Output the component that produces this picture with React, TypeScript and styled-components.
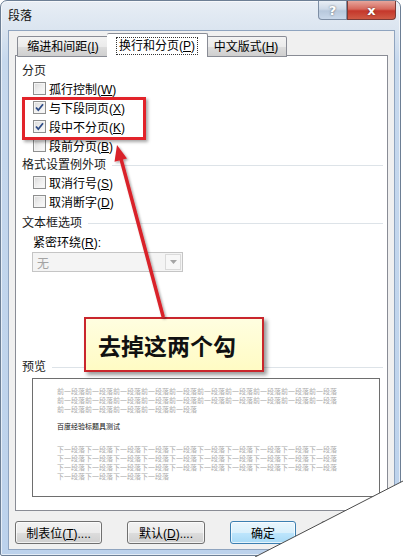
import React from 'react';
import styled, { createGlobalStyle } from 'styled-components';

const Global = createGlobalStyle`
  html, body { margin: 0; padding: 0; background: #fff; }
  body { font-family: "Liberation Sans", "Noto Sans CJK SC", sans-serif; font-size: 12px; color: #000; }
  #root { width: 403px; height: 557px; }
`;

const Root = styled.div`
  position: relative;
  width: 403px;
  height: 557px;
  overflow: hidden;
  background: #fff;
`;

const Window = styled.div`
  width: 399px;
  height: 554px;
  border: 1px solid #6d7f95;
  border-radius: 7px 7px 2px 2px;
  background: linear-gradient(180deg, #e8eef5 0px, #dbe5f0 28px, #c6d8ed 60px, #bcd2ec 100%);
  display: flex;
  flex-direction: column;
  box-shadow: inset 0 0 0 1px rgba(255,255,255,0.6);
`;

const TitleBar = styled.div`
  height: 29px;
  display: flex;
  align-items: flex-start;
  padding: 0 4px 0 7px;
`;

const Title = styled.div`
  margin-top: 6px;
  font-size: 12px;
  line-height: 18px;
  color: #111;
`;

const Caption = styled.div`
  margin-left: auto;
  display: flex;
`;

const CapBtn = styled.div<{ $kind: 'help' | 'close' }>`
  width: ${p => (p.$kind === 'close' ? 47 : 27)}px;
  height: 18px;
  display: flex;
  align-items: center;
  justify-content: center;
  border: 1px solid ${p => (p.$kind === 'close' ? '#7a3a36' : '#7d8ea4')};
  border-top: none;
  border-radius: ${p => (p.$kind === 'close' ? '0 0 4px 0' : '0 0 0 4px')};
  background: ${p =>
    p.$kind === 'close'
      ? 'linear-gradient(180deg, #e6a59b 0%, #d6685c 45%, #c4372b 55%, #cf5a45 100%)'
      : 'linear-gradient(180deg, #e9eef5 0%, #cdd9e7 45%, #b7c8dc 55%, #c9d8ea 100%)'};
  color: #fff;
  font-family: "DejaVu Sans", sans-serif;
  font-weight: bold;
  font-size: 13px;
  text-shadow: 0 0 2px rgba(0,0,0,0.6);
`;

const Client = styled.div`
  flex: 1;
  margin: 0 5px 5px 7px;
  border: 1px solid #8fa4bf;
  background: #f0f0f0;
  padding: 2px 6px 4px 6px;
  display: flex;
  flex-direction: column;
`;

const TabRow = styled.div`
  display: flex;
  height: 23px;
  padding-left: 2px;
  position: relative;
  z-index: 1;
  margin-bottom: -1px;
`;

const Tab = styled.div<{ $active?: boolean; $w: number }>`
  box-sizing: border-box;
  width: ${p => p.$w}px;
  margin-top: ${p => (p.$active ? 0 : 3)}px;
  height: ${p => (p.$active ? 24 : 21)}px;
  margin-left: ${p => (p.$active ? -2 : 0)}px;
  margin-right: ${p => (p.$active ? -2 : 0)}px;
  border: 1px solid #898c95;
  border-bottom: ${p => (p.$active ? 'none' : '1px solid #898c95')};
  border-radius: 2px 2px 0 0;
  background: ${p => (p.$active ? '#fff' : 'linear-gradient(180deg, #f3f3f3 0%, #ebebeb 50%, #dddddd 51%, #cfcfcf 100%)')};
  z-index: ${p => (p.$active ? 2 : 1)};
  display: flex;
  align-items: center;
  justify-content: center;
  font-size: 12px;
  line-height: 16px;
  white-space: nowrap;
  & + & { border-left: ${p => (p.$active ? '1px solid #898c95' : 'none')}; }
`;

const TabLabel = styled.span<{ $focus?: boolean }>`
  padding: 0 2px;
  outline: ${p => (p.$focus ? '1px dotted #333' : 'none')};
`;

const Panel = styled.div`
  box-sizing: border-box;
  width: 373px;
  height: 456px;
  border: 1px solid #898c95;
  background: #fff;
  padding: 7px 0 0 6px;
  display: flex;
  flex-direction: column;
`;

const GroupHead = styled.div<{ $mt?: number; $line?: boolean }>`
  display: flex;
  align-items: center;
  height: 16px;
  line-height: 16px;
  margin-top: ${p => p.$mt ?? 0}px;
  color: #1a1a1a;
  white-space: nowrap;
  &::after {
    content: '';
    flex: 1;
    margin: 1px 4px 0 6px;
    border-top: 1px solid ${p => (p.$line === false ? 'transparent' : '#dde3e8')};
  }
`;

const CheckRow = styled.div`
  display: flex;
  align-items: center;
  height: 19px;
  padding-left: 11px;
  gap: 3px;
  white-space: nowrap;
`;

const Box = styled.div`
  box-sizing: border-box;
  width: 13px;
  height: 13px;
  border: 1px solid #8e8f8f;
  background: linear-gradient(135deg, #d8d8d8 0%, #eeeeee 50%, #fbfbfb 100%);
  box-shadow: inset 0 0 0 1px #f4f4f4;
  display: flex;
  align-items: center;
  justify-content: center;
`;

const FieldLabel = styled.div`
  margin-top: 4px;
  padding-left: 11px;
  height: 16px;
  line-height: 16px;
`;

const Select = styled.div`
  box-sizing: border-box;
  margin: 1px 0 0 10px;
  width: 151px;
  height: 20px;
  border: 1px solid #c5c5c5;
  background: #f4f4f4;
  display: flex;
  align-items: center;
  justify-content: space-between;
  padding: 0 1px 0 4px;
  color: #a3a3a3;
`;

const DropBtn = styled.div`
  box-sizing: border-box;
  width: 16px;
  height: 16px;
  border: 1px solid #dadada;
  background: #f7f7f7;
  display: flex;
  align-items: center;
  justify-content: center;
`;

const Preview = styled.div`
  box-sizing: border-box;
  margin: 3px 0 0 10px;
  width: 348px;
  height: 119px;
  border: 1px solid #6e6e6e;
  padding: 8px 0 0 24px;
  display: flex;
  flex-direction: column;
  overflow: hidden;
`;

const PLine = styled.div<{ $dark?: boolean; $mt?: number }>`
  font-size: 7px;
  line-height: 9px;
  height: 9px;
  white-space: nowrap;
  color: ${p => (p.$dark ? '#111' : '#acacac')};
  margin-top: ${p => p.$mt ?? 0}px;
`;

const ButtonRow = styled.div`
  display: flex;
  margin-top: 10px;
  gap: 25px;
`;

const Button = styled.div<{ $w: number; $default?: boolean }>`
  box-sizing: border-box;
  width: ${p => p.$w}px;
  height: 23px;
  border: 1px solid ${p => (p.$default ? '#3c7fb1' : '#707070')};
  border-radius: 3px;
  background: ${p =>
    p.$default
      ? 'linear-gradient(180deg, #eaf6fd 0%, #d9f0fc 50%, #bee6fd 51%, #a7d9f5 100%)'
      : 'linear-gradient(180deg, #f2f2f2 0%, #ebebeb 50%, #dddddd 51%, #cfcfcf 100%)'};
  box-shadow: inset 0 0 0 1px rgba(255,255,255,0.7);
  display: flex;
  align-items: center;
  justify-content: center;
  white-space: nowrap;
  font-size: 12px;
`;

const RedBox = styled.div`
  position: absolute;
  left: 22px;
  top: 97px;
  width: 124px;
  height: 43px;
  box-sizing: border-box;
  border: 3px solid #e2232a;
  box-shadow: 2px 2px 3px rgba(0,0,0,0.35);
  pointer-events: none;
`;

const Callout = styled.div`
  position: absolute;
  left: 84px;
  top: 317px;
  width: 180px;
  height: 55px;
  box-sizing: border-box;
  border: 2px solid #c9262c;
  background: linear-gradient(180deg, #fffee0 0%, #fffbc4 100%);
  box-shadow: 3px 3px 4px rgba(0,0,0,0.4);
  display: flex;
  align-items: center;
  padding-left: 12px;
  font-family: "Noto Sans CJK SC", sans-serif;
  font-size: 23px;
  font-weight: 700;
  color: #111;
`;

const Overlay = styled.svg`
  position: absolute;
  left: 0;
  top: 0;
  pointer-events: none;
`;

const U = styled.span`
  text-decoration: underline;
`;

const Check = ({ on }: { on?: boolean }) => (
  <Box>
    {on && (
      <svg width="11" height="11" viewBox="0 0 11 11">
        <path d="M2 5.5 L4.3 8.2 L9 2.3" fill="none" stroke="#2d4b86" strokeWidth="1.8" />
      </svg>
    )}
  </Box>
);

const Lbl = ({ t, k, after }: { t: string; k: string; after?: string }) => (
  <span>
    {t}(<U>{k}</U>){after}
  </span>
);

const pre = '前一段落';
const nxt = '下一段落';

export default function App() {
  return (
    <Root>
      <Global />
      <Window>
        <TitleBar>
          <Title>段落</Title>
          <Caption>
            <CapBtn $kind="help">?</CapBtn>
            <CapBtn $kind="close">x</CapBtn>
          </Caption>
        </TitleBar>
        <Client>
          <TabRow>
            <Tab $w={92}>
              <TabLabel><Lbl t="缩进和间距" k="I" /></TabLabel>
            </Tab>
            <Tab $w={101} $active>
              <TabLabel $focus><Lbl t="换行和分页" k="P" /></TabLabel>
            </Tab>
            <Tab $w={81}>
              <TabLabel><Lbl t="中文版式" k="H" /></TabLabel>
            </Tab>
          </TabRow>
          <Panel>
            <GroupHead $line={false}>分页</GroupHead>
            <CheckRow><Check /><Lbl t="孤行控制" k="W" /></CheckRow>
            <CheckRow><Check on /><Lbl t="与下段同页" k="X" /></CheckRow>
            <CheckRow><Check on /><Lbl t="段中不分页" k="K" /></CheckRow>
            <CheckRow><Check /><Lbl t="段前分页" k="B" /></CheckRow>
            <GroupHead $mt={2}>格式设置例外项</GroupHead>
            <CheckRow><Check /><Lbl t="取消行号" k="S" /></CheckRow>
            <CheckRow><Check /><Lbl t="取消断字" k="D" /></CheckRow>
            <GroupHead $mt={4}>文本框选项</GroupHead>
            <FieldLabel><Lbl t="紧密环绕" k="R" after=":" /></FieldLabel>
            <Select>
              <span>无</span>
              <DropBtn>
                <svg width="7" height="4" viewBox="0 0 7 4">
                  <path d="M0 0 L7 0 L3.5 4 Z" fill="#a5a5a5" />
                </svg>
              </DropBtn>
            </Select>
            <GroupHead $mt={87}>预览</GroupHead>
            <Preview>
              <PLine>{pre.repeat(10)}</PLine>
              <PLine>{pre.repeat(10)}</PLine>
              <PLine>{pre.repeat(5)}</PLine>
              <PLine $dark $mt={8}>百度经验标题具测试</PLine>
              <PLine $mt={14}>{nxt.repeat(10)}</PLine>
              <PLine>{nxt.repeat(10)}</PLine>
              <PLine>{nxt.repeat(10)}</PLine>
              <PLine>{nxt.repeat(4)}</PLine>
            </Preview>
          </Panel>
          <ButtonRow>
            <Button $w={87}><Lbl t="制表位" k="T" after="...." /></Button>
            <Button $w={78}><Lbl t="默认" k="D" after="...." /></Button>
            <Button $w={66} $default>确定</Button>
            <Button $w={66}>取消</Button>
          </ButtonRow>
        </Client>
      </Window>

      <RedBox />
      <Callout>去掉这两个勾</Callout>

      <Overlay width="403" height="557" viewBox="0 0 403 557">
        <defs>
          <filter id="sh" x="-20%" y="-20%" width="140%" height="140%">
            <feDropShadow dx="1.5" dy="1.5" stdDeviation="1" floodColor="#000" floodOpacity="0.35" />
          </filter>
        </defs>
        <g filter="url(#sh)">
          <line x1="163" y1="316" x2="120.5" y2="157" stroke="#d9232a" strokeWidth="3.5" strokeLinecap="round" />
          <polygon points="117,145 127,158.5 114.5,161.8" fill="#d9232a" />
        </g>
        <polygon points="255,557 403,481 403,557" fill="#fff" />
        <line x1="255" y1="557" x2="403" y2="481" stroke="#4a4a4a" strokeWidth="1" />
      </Overlay>
    </Root>
  );
}
